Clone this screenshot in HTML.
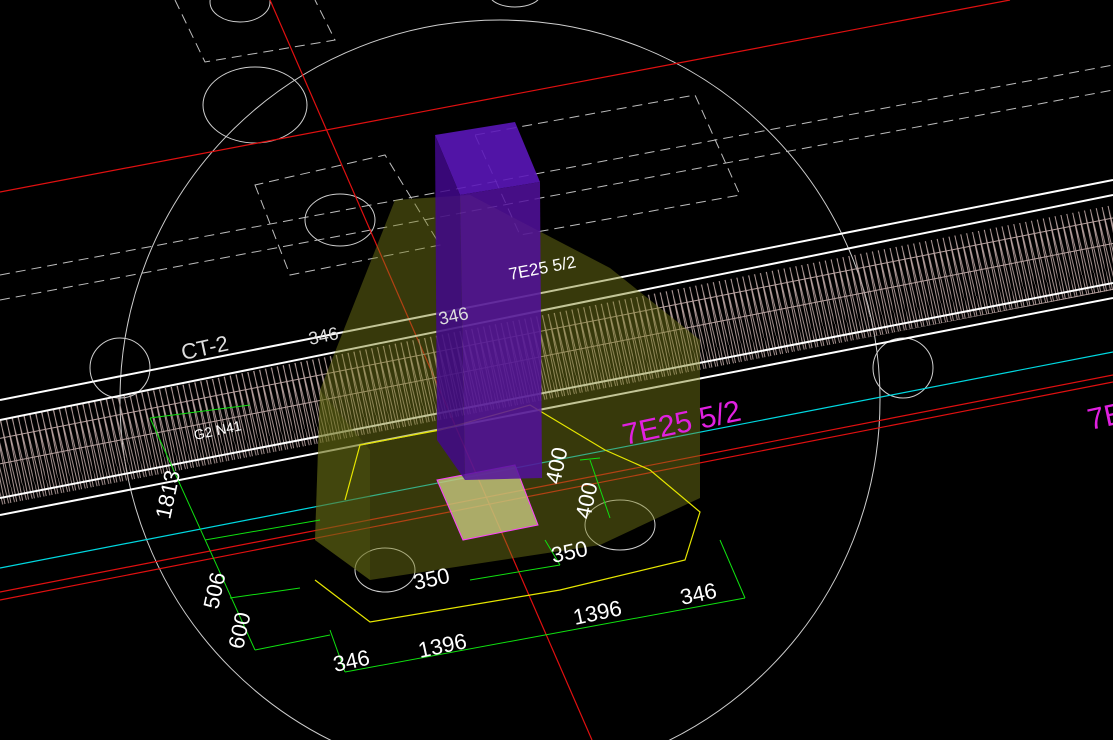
<!DOCTYPE html>
<html><head><style>
html,body{margin:0;padding:0;background:#000;overflow:hidden;width:1113px;height:740px}
svg{display:block}
text{font-family:"Liberation Sans",sans-serif}
</style></head><body>
<svg width="1113" height="740" viewBox="0 0 1113 740" xmlns="http://www.w3.org/2000/svg">
<rect width="1113" height="740" fill="#000"/>
<defs>
<pattern id="truss" width="12" height="120" patternUnits="userSpaceOnUse" patternTransform="rotate(-11.2)">
<path d="M0 0 L6 120 M6 0 L12 120 M3 0 V120 M9 0 V120 M0 20 H12 M0 45 H12 M0 70 H12 M0 95 H12" stroke="#b8a2a0" stroke-width="0.9" fill="none"/>
</pattern>
</defs>
<circle cx="500" cy="400" r="380" fill="none" stroke="#cfcfcf" stroke-width="1"/>
<g stroke="#bdbdbd" stroke-width="1" fill="none" stroke-dasharray="10,6">
<path d="M175 0 L205 62 L335 40 L315 0"/>
<path d="M255 185 L290 275 L440 245 L385 155 Z"/>
<path d="M475 135 L695 95 L740 195 L520 235 Z"/>
<path d="M0 275 L1113 65"/>
<path d="M0 300 L1113 90"/>
</g>
<ellipse cx="255" cy="105" rx="52" ry="38" fill="none" stroke="#cfcfcf"/>
<ellipse cx="340" cy="220" rx="35" ry="26" fill="none" stroke="#cfcfcf"/>
<ellipse cx="240" cy="2" rx="30" ry="20" fill="none" stroke="#cfcfcf"/>
<ellipse cx="515" cy="-5" rx="25" ry="12" fill="none" stroke="#cfcfcf"/>
<circle cx="120" cy="368" r="30" fill="none" stroke="#cfcfcf"/>
<circle cx="903" cy="368" r="30" fill="none" stroke="#cfcfcf"/>
<ellipse cx="385" cy="570" rx="30" ry="22" fill="none" stroke="#cfcfcf"/>
<ellipse cx="620" cy="525" rx="35" ry="25" fill="none" stroke="#cfcfcf"/>
<g stroke="#e01010" stroke-width="1.2">
<line x1="0" y1="192" x2="1010" y2="0"/>
<line x1="270" y1="0" x2="592" y2="740"/>
<line x1="0" y1="600" x2="1113" y2="382"/>
<line x1="0" y1="592" x2="1113" y2="375"/>
</g>
<line x1="0" y1="568" x2="1113" y2="352" stroke="#00d8e0" stroke-width="1.2"/>
<polygon points="0,420 1113,205 1113,290 0,505" fill="url(#truss)"/>
<g stroke="#fff" stroke-width="2" fill="none">
<line x1="0" y1="400" x2="1113" y2="180"/>
<line x1="0" y1="420" x2="1113" y2="195"/>
<line x1="0" y1="498" x2="1113" y2="283"/>
<line x1="0" y1="515" x2="1113" y2="298"/>
</g>
<polygon points="315,540 320,390 395,200 470,195 610,268 700,340 700,498 600,545 370,580" fill="#7a7e18" fill-opacity="0.45"/>
<polygon points="315,540 370,580 370,450 320,390" fill="#5a5e10" fill-opacity="0.35"/>
<polyline points="345,500 360,445 440,430 530,405 605,450 650,470 700,512 685,560 560,590 370,622 315,580" fill="none" stroke="#e6e600" stroke-width="1.2"/>
<polygon points="437,480 515,465 538,525 463,540" fill="#c8c880" fill-opacity="0.8" stroke="#ff40ff" stroke-width="1"/>
<polygon points="435,135 515,122 540,182 460,195" fill="#5a16b8" fill-opacity="0.9"/>
<polygon points="435,135 460,195 465,480 437,440" fill="#42088c" fill-opacity="0.85"/>
<polygon points="460,195 540,182 542,478 465,480" fill="#52109e" fill-opacity="0.85"/>
<g stroke="#10e010" stroke-width="1" fill="none">
<line x1="150" y1="418" x2="255" y2="650"/>
<line x1="150" y1="418" x2="250" y2="405"/>
<line x1="205" y1="540" x2="320" y2="520"/>
<line x1="230" y1="598" x2="300" y2="588"/>
<line x1="255" y1="650" x2="330" y2="635"/>
<line x1="345" y1="672" x2="745" y2="598"/>
<line x1="345" y1="672" x2="330" y2="630"/>
<line x1="745" y1="598" x2="720" y2="540"/>
<line x1="470" y1="580" x2="560" y2="565"/>
<line x1="545" y1="540" x2="560" y2="565"/>
<line x1="590" y1="460" x2="610" y2="518"/>
<line x1="580" y1="460" x2="600" y2="458"/>
</g>
<g fill="#fff" font-size="22">
<text transform="translate(510,280) rotate(-11)" font-size="17">7E25 5/2</text>
<text transform="translate(183,360) rotate(-12)" fill="#ddd">CT-2</text>
<text transform="translate(310,345) rotate(-12)" fill="#ddd" font-size="18">346</text>
<text transform="translate(440,325) rotate(-12)" fill="#ddd" font-size="18">346</text>
<text transform="translate(170,520) rotate(-78)">1813</text>
<text transform="translate(218,610) rotate(-78)">506</text>
<text transform="translate(243,650) rotate(-78)">600</text>
<text transform="translate(335,672) rotate(-12)">346</text>
<text transform="translate(420,658) rotate(-12)">1396</text>
<text transform="translate(575,625) rotate(-12)">1396</text>
<text transform="translate(682,605) rotate(-12)">346</text>
<text transform="translate(415,590) rotate(-12)">350</text>
<text transform="translate(553,563) rotate(-12)">350</text>
<text transform="translate(560,485) rotate(-78)">400</text>
<text transform="translate(590,520) rotate(-78)">400</text>
<text transform="translate(195,440) rotate(-12)" font-size="14">G2 N41</text>
</g>
<g fill="#e020e0" font-size="30">
<text transform="translate(625,445) rotate(-12)">7E25 5/2</text>
<text transform="translate(1090,430) rotate(-12)">7E</text>
</g>
</svg>
</body></html>
